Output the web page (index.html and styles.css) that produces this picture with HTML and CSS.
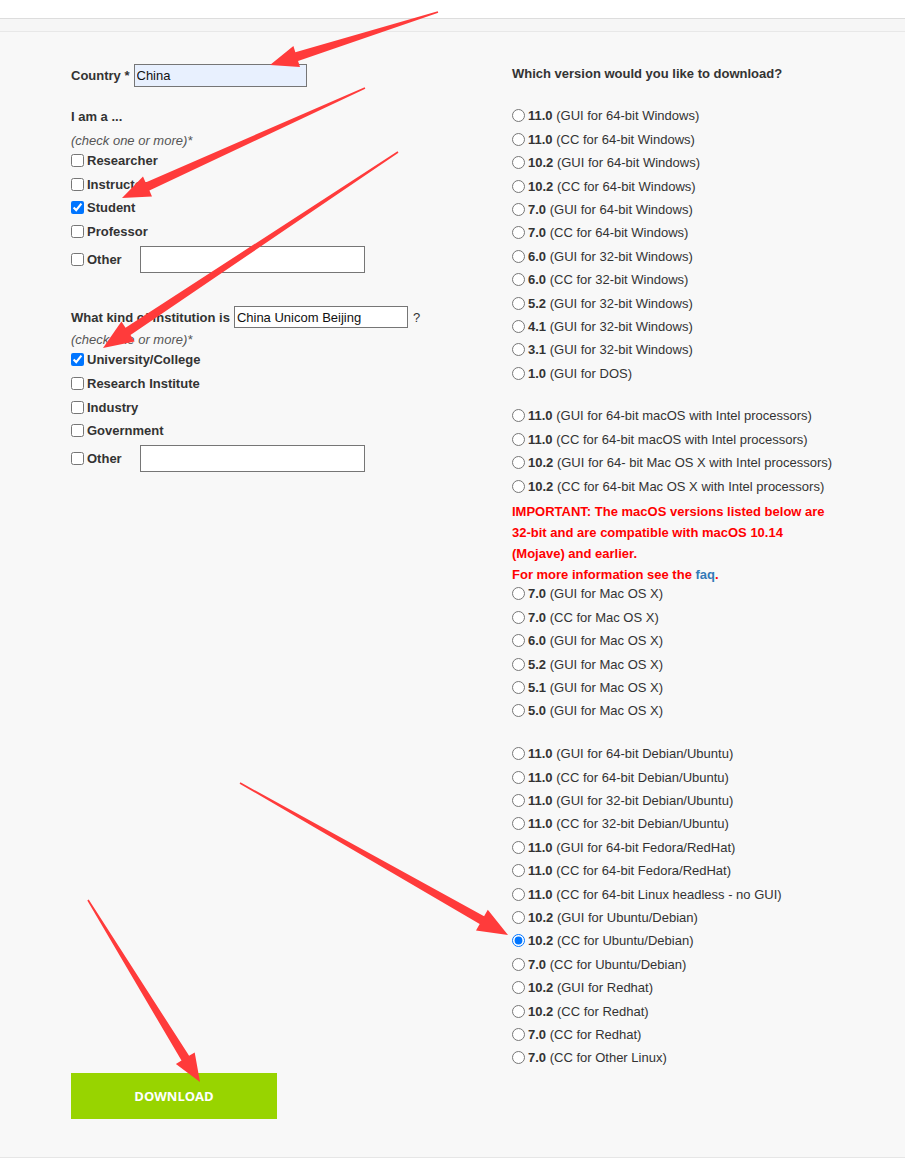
FILE: index.html
```html
<!DOCTYPE html>
<html lang="en">
<head>
<meta charset="utf-8">
<title>Download</title>
<link rel="stylesheet" href="styles.css">
</head>
<body>
<header class="topbar"></header>
<div class="subbar"></div>
<main class="page">
  <form class="dl-form">
    <div class="cols">
      <div class="col-left">
        <div class="country-row">
          <span class="lbl">Country *</span>
          <input class="txt txt-country" type="text" value="China">
        </div>
        <div class="q-title">I am a ...</div>
        <div class="hint">(check one or more)*</div>
        <div class="checks">
          <label class="chk"><input type="checkbox">Researcher</label>
          <label class="chk"><input type="checkbox">Instructor</label>
          <label class="chk"><input type="checkbox" checked>Student</label>
          <label class="chk"><input type="checkbox">Professor</label>
        </div>
        <div class="other-row">
          <label class="chk chk-other"><input type="checkbox">Other</label>
          <input class="txt txt-other" type="text">
        </div>
        <div class="inst-row">
          <span class="lbl">What kind of institution is</span>
          <input class="txt txt-inst" type="text" value="China Unicom Beijing">
          <span class="qmark">?</span>
        </div>
        <div class="hint hint-inst">(check one or more)*</div>
        <div class="checks">
          <label class="chk"><input type="checkbox" checked>University/College</label>
          <label class="chk"><input type="checkbox">Research Institute</label>
          <label class="chk"><input type="checkbox">Industry</label>
          <label class="chk"><input type="checkbox">Government</label>
        </div>
        <div class="other-row">
          <label class="chk chk-other"><input type="checkbox">Other</label>
          <input class="txt txt-other" type="text">
        </div>
      </div>

      <div class="col-right">
        <div class="v-title">Which version would you like to download?</div>

        <div class="group">
          <label class="rad"><input type="radio" name="v"><b>11.0</b>&nbsp;(GUI for 64-bit Windows)</label>
          <label class="rad"><input type="radio" name="v"><b>11.0</b>&nbsp;(CC for 64-bit Windows)</label>
          <label class="rad"><input type="radio" name="v"><b>10.2</b>&nbsp;(GUI for 64-bit Windows)</label>
          <label class="rad"><input type="radio" name="v"><b>10.2</b>&nbsp;(CC for 64-bit Windows)</label>
          <label class="rad"><input type="radio" name="v"><b>7.0</b>&nbsp;(GUI for 64-bit Windows)</label>
          <label class="rad"><input type="radio" name="v"><b>7.0</b>&nbsp;(CC for 64-bit Windows)</label>
          <label class="rad"><input type="radio" name="v"><b>6.0</b>&nbsp;(GUI for 32-bit Windows)</label>
          <label class="rad"><input type="radio" name="v"><b>6.0</b>&nbsp;(CC for 32-bit Windows)</label>
          <label class="rad"><input type="radio" name="v"><b>5.2</b>&nbsp;(GUI for 32-bit Windows)</label>
          <label class="rad"><input type="radio" name="v"><b>4.1</b>&nbsp;(GUI for 32-bit Windows)</label>
          <label class="rad"><input type="radio" name="v"><b>3.1</b>&nbsp;(GUI for 32-bit Windows)</label>
          <label class="rad"><input type="radio" name="v"><b>1.0</b>&nbsp;(GUI for DOS)</label>
        </div>

        <div class="group">
          <label class="rad"><input type="radio" name="v"><b>11.0</b>&nbsp;(GUI for 64-bit macOS with Intel processors)</label>
          <label class="rad"><input type="radio" name="v"><b>11.0</b>&nbsp;(CC for 64-bit macOS with Intel processors)</label>
          <label class="rad"><input type="radio" name="v"><b>10.2</b>&nbsp;(GUI for 64- bit Mac OS X with Intel processors)</label>
          <label class="rad"><input type="radio" name="v"><b>10.2</b>&nbsp;(CC for 64-bit Mac OS X with Intel processors)</label>
          <p class="notice">IMPORTANT: The macOS versions listed below are<br>32-bit and are compatible with macOS 10.14<br>(Mojave) and earlier.<br>For more information see the <a class="faq" href="#">faq</a>.</p>
          <label class="rad"><input type="radio" name="v"><b>7.0</b>&nbsp;(GUI for Mac OS X)</label>
          <label class="rad"><input type="radio" name="v"><b>7.0</b>&nbsp;(CC for Mac OS X)</label>
          <label class="rad"><input type="radio" name="v"><b>6.0</b>&nbsp;(GUI for Mac OS X)</label>
          <label class="rad"><input type="radio" name="v"><b>5.2</b>&nbsp;(GUI for Mac OS X)</label>
          <label class="rad"><input type="radio" name="v"><b>5.1</b>&nbsp;(GUI for Mac OS X)</label>
          <label class="rad"><input type="radio" name="v"><b>5.0</b>&nbsp;(GUI for Mac OS X)</label>
        </div>

        <div class="group group-linux">
          <label class="rad"><input type="radio" name="v"><b>11.0</b>&nbsp;(GUI for 64-bit Debian/Ubuntu)</label>
          <label class="rad"><input type="radio" name="v"><b>11.0</b>&nbsp;(CC for 64-bit Debian/Ubuntu)</label>
          <label class="rad"><input type="radio" name="v"><b>11.0</b>&nbsp;(GUI for 32-bit Debian/Ubuntu)</label>
          <label class="rad"><input type="radio" name="v"><b>11.0</b>&nbsp;(CC for 32-bit Debian/Ubuntu)</label>
          <label class="rad"><input type="radio" name="v"><b>11.0</b>&nbsp;(GUI for 64-bit Fedora/RedHat)</label>
          <label class="rad"><input type="radio" name="v"><b>11.0</b>&nbsp;(CC for 64-bit Fedora/RedHat)</label>
          <label class="rad"><input type="radio" name="v"><b>11.0</b>&nbsp;(CC for 64-bit Linux headless - no GUI)</label>
          <label class="rad"><input type="radio" name="v"><b>10.2</b>&nbsp;(GUI for Ubuntu/Debian)</label>
          <label class="rad"><input type="radio" name="v" checked><b>10.2</b>&nbsp;(CC for Ubuntu/Debian)</label>
          <label class="rad"><input type="radio" name="v"><b>7.0</b>&nbsp;(CC for Ubuntu/Debian)</label>
          <label class="rad"><input type="radio" name="v"><b>10.2</b>&nbsp;(GUI for Redhat)</label>
          <label class="rad"><input type="radio" name="v"><b>10.2</b>&nbsp;(CC for Redhat)</label>
          <label class="rad"><input type="radio" name="v"><b>7.0</b>&nbsp;(CC for Redhat)</label>
          <label class="rad"><input type="radio" name="v"><b>7.0</b>&nbsp;(CC for Other Linux)</label>
        </div>
      </div>
    </div>
    <button class="download" type="button">DOWNLOAD</button>
  </form>
</main>

<svg class="arrows" width="905" height="1161" viewBox="0 0 905 1161" aria-hidden="true">
  <polygon points="437.75,11.2 295.35,52.3 293.4,46.1 270,65 300,67.1 298.05,60.9 438.25,12.8"/>
  <polygon points="364.7,87.3 145.6,182.4 143,176.4 122,198 152,196.5 149.4,190.5 365.3,88.7"/>
  <polygon points="397.55,151.3 125.5,327.7 121.4,321.4 103,348 134.6,341.4 130.5,335.1 398.45,152.7"/>
  <polygon points="239.6,783.7 479.7,924.1 476,930.6 508,935 487.8,909.8 484.1,916.3 240.4,782.3"/>
  <polygon points="87.3,900.4 181.5,1060.6 175.9,1064 200,1082 194.7,1052.4 189.1,1055.8 88.7,899.6"/>
</svg>
</body>
</html>
```

FILE: styles.css
```css
* { box-sizing: border-box; }

html, body {
  margin: 0;
  padding: 0;
  background: #ffffff;
}

body {
  font-family: "Liberation Sans", Arial, sans-serif;
  font-size: 13px;
  color: #333333;
  position: relative;
  min-height: 1161px;
}

.topbar {
  height: 19px;
  background: #ffffff;
  border-bottom: 1px solid #dddddd;
}

.subbar {
  height: 13px;
  background: #f6f6f6;
  border-bottom: 1px solid #e8e8e8;
}

.page {
  background: #f8f8f8;
  padding: 0 0 38px 71px;
  border-bottom: 1px solid #e6e6e6;
}

.cols {
  display: grid;
  grid-template-columns: 441px 1fr;
}

/* ---------- left column ---------- */
.col-left {
  display: flex;
  flex-direction: column;
  align-items: flex-start;
}

.lbl {
  font-weight: bold;
}

.txt {
  font-family: "Liberation Sans", Arial, sans-serif;
  font-size: 13px;
  color: #111;
  border: 1px solid #767676;
  background: #ffffff;
  padding: 1px 2px;
  margin: 0;
  border-radius: 0;
}

.country-row {
  display: flex;
  align-items: center;
  gap: 4px;
  margin-top: 32px;
  height: 23px;
}

.txt-country {
  width: 173px;
  height: 23px;
  background: #e8f0fe;
}

.q-title {
  font-weight: bold;
  line-height: 16px;
  margin-top: 22px;
}

.hint {
  font-style: italic;
  color: #555555;
  line-height: 16px;
  margin-top: 8px;
}

.hint-inst {
  margin-top: 4px;
}

.checks {
  display: flex;
  flex-direction: column;
  margin-top: -0.4px;
}

.chk {
  display: flex;
  align-items: center;
  height: 23.6px;
  font-weight: bold;
  white-space: nowrap;
}

.chk input {
  width: 13px;
  height: 13px;
  margin: 0 3px 0 0;
}

.other-row {
  display: flex;
  align-items: center;
  height: 26px;
  margin-top: 3.5px;
}

.chk-other {
  width: 69px;
  height: 26px;
}

.txt-other {
  width: 225px;
  height: 27px;
}

.inst-row {
  display: flex;
  align-items: center;
  gap: 4px;
  height: 22px;
  margin-top: 34px;
}

.txt-inst {
  width: 174px;
  height: 22px;
}

.qmark {
  margin-left: 1px;
}

/* ---------- right column ---------- */
.col-right {
  display: flex;
  flex-direction: column;
}

.v-title {
  font-weight: bold;
  line-height: 16px;
  margin-top: 34px;
  margin-bottom: 22.3px;
}

.group {
  display: flex;
  flex-direction: column;
}

.group + .group {
  margin-top: 19.2px;
}

.group-linux {
  margin-top: 19.6px !important;
}

.rad {
  display: flex;
  align-items: center;
  height: 23.4px;
  white-space: nowrap;
}

.rad input {
  width: 13px;
  height: 13px;
  margin: 0 3px 0 0;
}

.rad b {
  font-weight: bold;
}

.notice {
  margin: 3.6px 0 -3.2px 0;
  line-height: 21px;
  color: #ff0000;
  font-weight: bold;
}

.faq {
  color: #337ab7;
  text-decoration: none;
}

/* ---------- button ---------- */
.download {
  display: block;
  margin-top: 3px;
  width: 206px;
  height: 46px;
  border: 0;
  background: #98d400;
  color: #ffffff;
  font-family: "Open Sans", "Liberation Sans", sans-serif;
  font-weight: bold;
  font-size: 13px;
  cursor: pointer;
}

/* ---------- annotation overlay ---------- */
.arrows {
  position: absolute;
  left: 0;
  top: 0;
  pointer-events: none;
}

.arrows polygon {
  fill: #ff3b3b;
}
```
